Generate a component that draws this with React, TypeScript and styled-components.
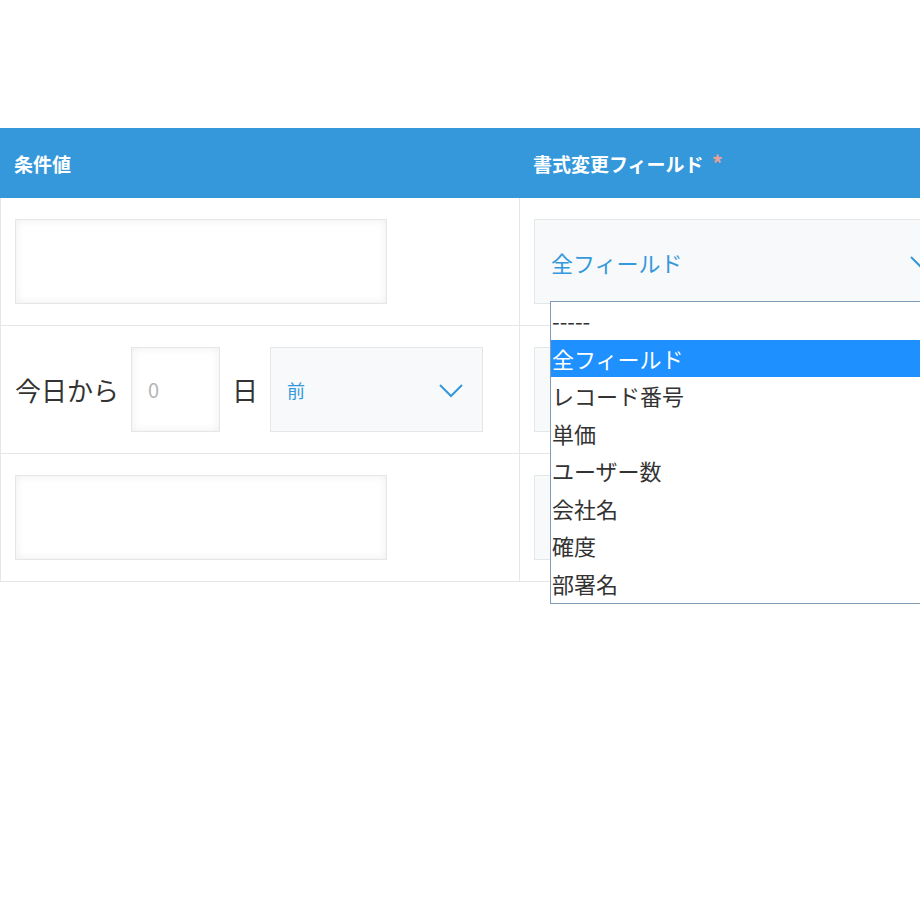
import React from 'react';
import styled, { createGlobalStyle } from 'styled-components';

const Global = createGlobalStyle`
  body { margin: 0; background: #fff; font-family: "Noto Sans CJK JP", "Noto Sans", sans-serif; }
  #root { width: 920px; height: 920px; overflow: hidden; }
`;

const Page = styled.div`
  padding-top: 128px;
`;

const Table = styled.div`
  width: 1060px;
  display: grid;
  grid-template-columns: 519px 541px;
  position: relative;
`;

const HeadCell = styled.div`
  background: #3498db;
  height: 70px;
  display: flex;
  align-items: center;
  padding-left: 13px;
  color: #fff;
  font-size: 19px;
  font-weight: 700;
  border-left: 1px solid #3498db;
  box-sizing: border-box;
`;

const Required = styled.span`
  color: #e5a09a;
  font-size: 22px;
  margin-left: 8px;
  align-self: flex-start;
  margin-top: 18px;
`;

const Cell = styled.div`
  height: 128px;
  box-sizing: border-box;
  border-left: 1px solid #e3e7e8;
  border-bottom: 1px solid #e3e7e8;
  display: flex;
  align-items: center;
  padding-left: 14px;
  gap: 12px;
`;

const TextBox = styled.div<{ $w: number }>`
  width: ${p => p.$w}px;
  height: 85px;
  box-sizing: border-box;
  border: 1px solid #e3e7e8;
  background: #fff;
  box-shadow: inset 0 0 10px rgba(0, 0, 0, 0.07);
  display: flex;
  align-items: center;
  padding-left: 16px;
  color: #b5b5b5;
  font-size: 20px;
`;

const Select = styled.div<{ $w: number; $pad: number }>`
  width: ${p => p.$w}px;
  height: 85px;
  box-sizing: border-box;
  border: 1px solid #e3e7e8;
  background: #f7f9fa;
  display: flex;
  align-items: center;
  justify-content: space-between;
  padding: 0 ${p => p.$pad}px 0 16px;
  color: #3498db;
  font-size: ${p => (p.$pad > 20 ? 22 : 18)}px;
`;

const Label = styled.span`
  font-size: 26px;
  color: #333;
`;

const List = styled.div`
  position: absolute;
  left: 550px;
  top: 173px;
  width: 400px;
  height: 303px;
  background: #fff;
  border: 1px solid #7f9db9;
  border-right: none;
  box-sizing: border-box;
  overflow: hidden;
`;

const Option = styled.div<{ $active?: boolean }>`
  height: 37.5px;
  line-height: 37.5px;
  font-size: 22px;
  color: ${p => (p.$active ? '#fff' : '#333')};
  background: ${p => (p.$active ? '#1e90ff' : 'transparent')};
  padding-left: 1px;
`;

const Chevron = () => (
  <svg width="26" height="16" viewBox="0 0 26 16" fill="none" stroke="#3498db" strokeWidth="2">
    <path d="M2 3l11 11L24 3" />
  </svg>
);

const options = ['-----', '全フィールド', 'レコード番号', '単価', 'ユーザー数', '会社名', '確度', '部署名'];

export default function App() {
  return (
    <Page>
      <Global />
      <Table>
        <HeadCell>条件値</HeadCell>
        <HeadCell>書式変更フィールド<Required>*</Required></HeadCell>
        <Cell><TextBox $w={372} /></Cell>
        <Cell><Select $w={520} $pad={118}>全フィールド<Chevron /></Select></Cell>
        <Cell>
          <Label>今日から</Label>
          <TextBox $w={89}>0</TextBox>
          <Label>日</Label>
          <Select $w={213} $pad={18}>前<Chevron /></Select>
        </Cell>
        <Cell><Select $w={520} $pad={118} /></Cell>
        <Cell><TextBox $w={372} /></Cell>
        <Cell><Select $w={520} $pad={118} /></Cell>
        <List>
          {options.map((o, i) => (
            <Option key={o} $active={i === 1}>{o}</Option>
          ))}
        </List>
      </Table>
    </Page>
  );
}
